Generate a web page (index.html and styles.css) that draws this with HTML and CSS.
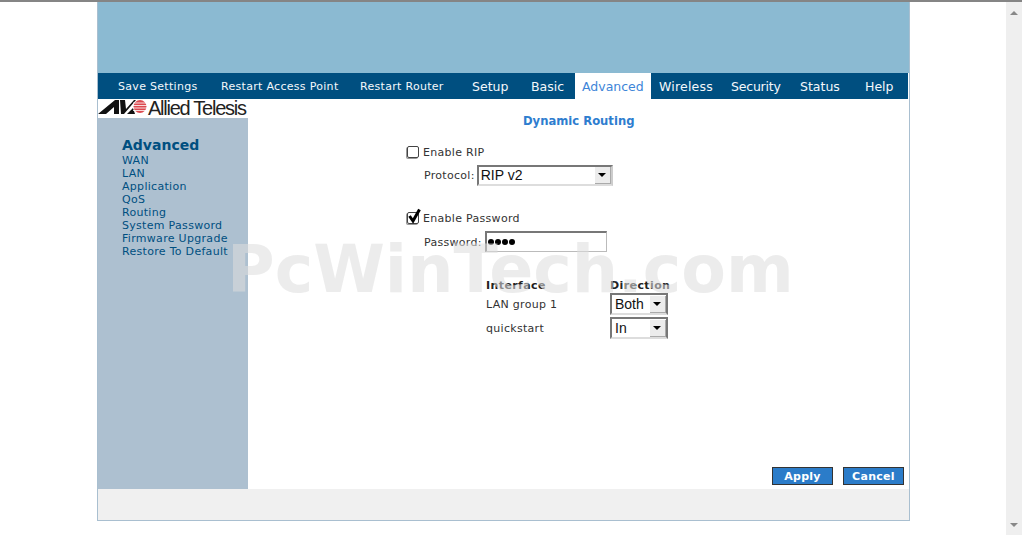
FILE: index.html
```html
<!DOCTYPE html>
<html lang="en">
<head>
<meta charset="utf-8">
<title>Dynamic Routing</title>
<link rel="stylesheet" href="styles.css">
</head>
<body>
<div class="topline"></div>
<div class="viewport">
  <div class="gutter">
    <div class="frame">
      <div class="banner"></div>
      <nav class="nav">
        <a class="nav-small ns1">Save Settings</a>
        <a class="nav-small ns2">Restart Access Point</a>
        <a class="nav-small ns3">Restart Router</a>
        <a class="nav-big n1">Setup</a>
        <a class="nav-big n2">Basic</a>
        <a class="nav-big n3 active">Advanced</a>
        <a class="nav-big n4">Wireless</a>
        <a class="nav-big n5">Security</a>
        <a class="nav-big n6">Status</a>
        <a class="nav-big n7">Help</a>
      </nav>
      <div class="body-row">
        <aside class="side">
          <div class="logo">
            <svg class="logo-mark" width="50" height="19" viewBox="0 0 50 19">
              <path d="M0 15 L17 1 L21 1 L21 15 L16 15 L16 8 L8 15 Z" fill="#111"/>
              <path d="M22 1 L27 1 L28 10 L36 1 L38 1 L26 15 L23 15 Z" fill="#111"/>
              <path d="M29 15 L35 9 L37 15 Z" fill="#111"/>
              <circle cx="42" cy="7.500" r="6.500" fill="#dc4a50"/>
              <path d="M35 4h14M35 6.500h14M35 9h14M35 11.500h14" stroke="#fff" stroke-width=".8"/>
            </svg>
            <span class="logo-text">Allied Telesis</span>
          </div>
          <div class="menu">
            <div class="menu-title">Advanced</div>
            <a>WAN</a>
            <a>LAN</a>
            <a>Application</a>
            <a>QoS</a>
            <a>Routing</a>
            <a>System Password</a>
            <a>Firmware Upgrade</a>
            <a>Restore To Default</a>
          </div>
        </aside>
        <main class="content">
          <h1 class="title">Dynamic Routing</h1>
          <form class="form">
            <div class="check-row">
              <span class="check"></span>
              <span>Enable RIP</span>
            </div>
            <div class="field-row protocol-row">
              <span>Protocol:</span>
              <div class="select select-wide"><span class="select-value">RIP v2</span><span class="arrow"></span></div>
            </div>
            <div class="check-row password-check">
              <span class="check">
                <svg class="tick" width="15" height="16" viewBox="0 0 15 16"><path d="M2.500 8 L6 13 L12.500 1.500" fill="none" stroke="#000" stroke-width="3"/></svg>
              </span>
              <span>Enable Password</span>
            </div>
            <div class="field-row password-row">
              <span class="password-label">Password:</span>
              <div class="password-input"><span class="dot"></span><span class="dot"></span><span class="dot"></span><span class="dot"></span></div>
            </div>
            <div class="routes">
              <b>Interface</b>
              <b>Direction</b>
              <span>LAN group 1</span>
              <div class="select select-small"><span class="select-value">Both</span><span class="arrow"></span></div>
              <span>quickstart</span>
              <div class="select select-small"><span class="select-value">In</span><span class="arrow"></span></div>
            </div>
          </form>
          <div class="actions">
            <button class="btn" type="button">Apply</button>
            <button class="btn" type="button">Cancel</button>
          </div>
        </main>
      </div>
      <div class="footer"></div>
    </div>
  </div>
  <div class="scrollbar">
    <span class="sb-up"></span>
    <span class="sb-down"></span>
  </div>
</div>
<div class="watermark">PcWinTech.com</div>
</body>
</html>
```
FILE: styles.css
```css
* { box-sizing: border-box; }
html, body { margin: 0; padding: 0; width: 1022px; height: 535px; overflow: hidden; background: #fff; }
body { font-family: "DejaVu Sans", Verdana, sans-serif; font-size: 11px; letter-spacing: .3px; color: #333; position: relative; }
a { display: block; }

.topline { height: 2px; background: #858585; }
.viewport { display: flex; height: 533px; }
.gutter { width: 1006px; padding-left: 97px; }
.frame { width: 813px; height: 519px; border: solid #a9bfd0; border-width: 0 1px 1px 1px; display: flex; flex-direction: column; }

.banner { height: 71px; background: #8bbad2; flex: none; }
.nav { height: 26px; background: #004f80; display: flex; align-items: stretch; flex: none; margin-right: 1px; }
.nav a { color: #f4f8fb; display: flex; align-items: center; white-space: nowrap; height: 26px; }
.nav-small { font-size: 11px; }
.nav-big { font-size: 12.500px; letter-spacing: 0; }
.ns1 { margin-left: 20px; width: 103px; }
.ns2 { width: 139px; }
.ns3 { width: 112px; }
.n1 { width: 59px; }
.n2 { width: 44px; }
.nav .active { width: 76px; background: #fff; color: #3d85d8; padding-left: 7px; }
.n4 { width: 80px; padding-left: 8px; letter-spacing: .2px; }
.n5 { width: 69px; letter-spacing: -.2px; }
.n6 { width: 65px; }
.n7 { width: 40px; }

.body-row { flex: 1; display: flex; min-height: 0; }
.side { width: 150px; background: #adc0d0; flex: none; }
.logo { height: 19px; background: #fff; display: flex; align-items: center; }
.logo-mark { flex: none; }
.logo-text { font-family: "Liberation Sans", Arial, sans-serif; font-size: 20px; line-height: 19px; letter-spacing: -1.250px; color: #222; white-space: nowrap; flex: none; }
.menu { padding: 19px 0 0 24px; color: #004f80; line-height: 13px; font-size: 11px; }
.menu-title { font-size: 14px; letter-spacing: 0; font-weight: bold; line-height: 17px; }

.content { flex: 1; position: relative; background: #fff; display: flex; flex-direction: column; }
.title { margin: 15px 0 0 0; padding-left: 275px; font-size: 11.600px; letter-spacing: 0; line-height: 14px; font-weight: bold; color: #2e7dcf; }
.form { padding: 17px 0 0 159px; flex: 1; }
.check-row { display: flex; align-items: center; height: 14px; gap: 4px; }
.check { width: 12px; height: 12px; border: 1px solid #444; border-radius: 2px; position: relative; flex: none; box-shadow: -1px 1px 0 #999; }
.tick { position: absolute; left: -1px; top: -5px; }
.field-row { display: flex; align-items: center; padding-left: 17px; gap: 2px; }
.protocol-row { margin-top: 5px; height: 22px; }
.password-check { margin-top: 25px; }
.password-row { margin-top: 5px; height: 23px; gap: 3px; }
.password-label { padding-top: 2px; }

.select { border: 2px solid #777; border-right-color: #ccc; border-bottom-color: #ddd; display: flex; align-items: center; justify-content: space-between; background: #fff; letter-spacing: 0; }
.select-wide { width: 136px; height: 21px; }
.select-small { width: 58px; height: 22px; border-right-color: #777; margin-top: 1px; }
.select-value { font-family: "Liberation Sans", Arial, sans-serif; font-size: 14px; color: #111; padding-left: 2px; }
.select-small .select-value { padding-left: 3px; }
.arrow { width: 16px; height: 17px; background: #ececec; border-right: 1px solid #aaa; border-bottom: 1px solid #aaa; position: relative; flex: none; }
.arrow::after { content: ""; position: absolute; left: 3px; top: 6px; border: 4px solid transparent; border-top: 4px solid #000; border-bottom: 0; }
.password-input { width: 122px; height: 21px; border: 1px solid #bbb; border-top: 2px solid #777; border-left: 2px solid #777; display: flex; align-items: center; gap: 1px; padding-left: 1px; padding-bottom: 1px; background: #fff; }
.dot { width: 6px; height: 6px; border-radius: 50%; background: #000; }

.routes { display: grid; grid-template-columns: 124px 70px; margin: 25px 0 0 79px; grid-template-rows: 14px 24px 24px; }
.routes > b, .routes > span { align-self: center; }
.routes > b { color: #222; letter-spacing: .4px; }

.actions { display: flex; justify-content: flex-end; gap: 10px; padding-right: 5px; height: 22px; flex: none; }
.btn { width: 61px; height: 18px; padding: 0; background: #2b7cc9; border: 1px solid #333; color: #fff; font: bold 11px "DejaVu Sans", Verdana, sans-serif; letter-spacing: .3px; }

.footer { height: 31px; background: #f0f0f0; flex: none; }

.scrollbar { width: 16px; height: 533px; background: #efefef; display: flex; flex-direction: column; justify-content: space-between; align-items: center; padding: 9px 0 8px; }
.sb-up, .sb-down { border: 4px solid transparent; }
.sb-up { border-bottom: 4px solid #888; border-top: 0; }
.sb-down { border-top: 4px solid #888; border-bottom: 0; }

.watermark { position: absolute; left: 227px; top: 232px; font-size: 65px; letter-spacing: 0; line-height: 76px; font-weight: bold; color: rgba(221,221,221,.56); white-space: nowrap; pointer-events: none; }
```
